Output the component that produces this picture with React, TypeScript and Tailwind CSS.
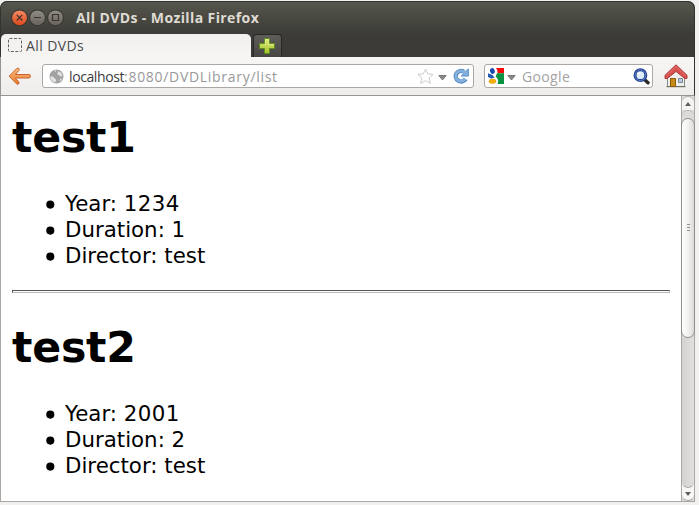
import React from "react";

const uiFont = "font-['Open_Sans','Noto_Sans',sans-serif]";

const dvds = [
  { title: "test1", year: "1234", duration: "1", director: "test" },
  { title: "test2", year: "2001", duration: "2", director: "test" },
];

function WindowButton({ kind }: { kind: "close" | "min" | "max" }) {
  const close = kind === "close";
  return (
    <svg className="block h-[18px] w-[18px]" viewBox="0 0 18 18">
      <defs>
        <linearGradient id={"wb-" + kind} x1="0" y1="0" x2="0" y2="1">
          <stop offset="0" stopColor={close ? "#f58a63" : "#8f8d84"} />
          <stop offset="1" stopColor={close ? "#dc4a1c" : "#66645d"} />
        </linearGradient>
      </defs>
      <circle cx="9.5" cy="8.8" r="8.3" fill="#33322e" />
      <circle cx="9.5" cy="8.8" r="7.4" fill={`url(#wb-${kind})`} />
      <g stroke="#3b332c" strokeWidth="1.2" fill="none">
        {kind === "close" && <path d="M6.7 5.9l5.6 5.6M12.3 5.9l-5.6 5.6" />}
        {kind === "min" && <path d="M6 8.5h7" />}
        {kind === "max" && <path d="M6.5 5.5h6v6h-6z" />}
      </g>
    </svg>
  );
}

function PlusIcon() {
  return (
    <svg className="block h-4 w-4" viewBox="0 0 16 16">
      <defs>
        <linearGradient id="plus" x1="0" y1="0" x2="0" y2="1">
          <stop offset="0" stopColor="#dbea76" />
          <stop offset="1" stopColor="#a6c52e" />
        </linearGradient>
      </defs>
      <path d="M5.5.5h5v5h5v5h-5v5h-5v-5h-5v-5h5z" fill="url(#plus)" stroke="#5f8c1c" />
      <path d="M6.5 6.5v-5h3v5h5" fill="none" stroke="#eef5ac" strokeOpacity=".6" />
    </svg>
  );
}

function BackIcon() {
  return (
    <svg className="block h-[19px] w-[23px]" viewBox="0 0 23 19">
      <defs>
        <linearGradient id="back" x1="0" y1="0" x2="0" y2="1">
          <stop offset="0" stopColor="#f8bd83" />
          <stop offset="1" stopColor="#e8792c" />
        </linearGradient>
      </defs>
      <path
        d="M1.2 9.2 8.8 1.4Q10.6.4 11.2 2L11 3.3 7.3 7.5H20.8Q22.3 7.5 22.3 8.6V9.9Q22.3 11 20.8 11H7.3L11 15.2Q11.3 17.9 8.8 17.1Z"
        fill="url(#back)"
        stroke="#c9632d"
        strokeLinejoin="round"
      />
    </svg>
  );
}

function GlobeIcon() {
  return (
    <svg className="block h-[15px] w-[15px]" viewBox="0 0 15 15">
      <circle cx="7.5" cy="7.5" r="7" fill="#a2a2a2" />
      <path
        d="M5.2 1.6 7.4 1.4 6.6 3.2ZM8.8 2.2 12 3.4 13.4 6.4 11.8 7.8 10.4 6.2 8.6 5.8ZM1.3 7.2 3.6 7.6 6 9.4 7.4 11.4 6 13.6 3.4 12.4 1.6 9.8ZM11.2 10 12.9 9.3 11.9 11.6 10.4 12.6Z"
        fill="#e2e2e2"
      />
    </svg>
  );
}

function StarIcon() {
  return (
    <svg className="block h-[17px] w-[17px]" viewBox="0 0 17 17">
      <path
        d="M8.5 1l2.2 4.9 5.4.5-4 3.6 1.3 5.4-4.9-2.8-4.9 2.8 1.3-5.4-4-3.6 5.4-.5z"
        fill="#fff"
        stroke="#cbcbcb"
        strokeLinejoin="round"
      />
    </svg>
  );
}

function DropArrow() {
  return (
    <svg className="block h-[6px] w-[9px]" viewBox="0 0 9 6">
      <path d="M.8.5h7.4L4.5 5z" fill="#8a8a8a" stroke="#707070" strokeWidth=".9" />
    </svg>
  );
}

function ReloadIcon() {
  return (
    <svg className="block h-4 w-4" viewBox="0 0 16 16">
      <path d="M12.6 11A5.3 5.3 0 1 1 10.8 3.6" fill="none" stroke="#5689c2" strokeWidth="4.4" />
      <path d="M15.4.9v7.2H8.2L10.6 5.6 9 3.8 12.8 3.2Z" fill="#84b0dc" stroke="#5689c2" strokeWidth=".9" strokeLinejoin="round" />
      <path d="M12.2 10.7A5.1 5.1 0 1 1 11.2 4.2L12.6 5.6" fill="none" stroke="#84b0dc" strokeWidth="2.8" />
    </svg>
  );
}

function GoogleIcon() {
  return (
    <svg className="block h-4 w-4" viewBox="0 0 16 16">
      <rect width="16" height="16" fill="#fff" />
      <path d="M8 0h8v5.2H9.6Q10 2 8 0Z" fill="#f50a0a" />
      <path d="M9 5.2h7V16H9.5Q11.5 11.5 7.6 8.4Z" fill="#079242" />
      <path d="M0 5.2 4.5 7 6.5 9.8 3 10.4 0 9Z" fill="#2458b4" />
      <ellipse cx="4.4" cy="3" rx="2.3" ry="3" transform="rotate(-18 4.4 3)" fill="#1648ae" />
      <ellipse cx="4.5" cy="13.3" rx="3.5" ry="2.2" fill="#f5ae0b" stroke="#e39a04" strokeWidth=".5" />
    </svg>
  );
}

function SearchIcon() {
  return (
    <svg className="block h-[17px] w-[17px]" viewBox="0 0 17 17">
      <path d="m11.4 11.4 3.6 3.4" stroke="#292929" strokeWidth="3.4" strokeLinecap="round" />
      <circle cx="7.4" cy="7.2" r="5.4" fill="#dcecf8" stroke="#25408f" strokeWidth="3" />
      <circle cx="7.4" cy="7.2" r="5.4" fill="none" stroke="#5c80cc" strokeWidth="1" />
      <path d="M5 7a2.4 2.4 0 0 1 2.5-2.4" fill="none" stroke="#fff" strokeWidth="1.4" />
    </svg>
  );
}

function HomeIcon() {
  return (
    <svg className="block h-6 w-6" viewBox="0 0 24 24">
      <path d="M3.5 12 12 5l8.5 7v10.5h-17z" fill="#eeeeec" stroke="#888a85" />
      <path d="M2.5 22.7h19" stroke="#666862" />
      <path d="M6.5 14.5h5v8h-5z" fill="#c98a18" stroke="#8b5b0b" />
      <path d="M14.5 14.5h4v4h-4z" fill="#b6cbe0" stroke="#7b8792" />
      <path d="M12 .8 1 11.3v3.2h2.2L12 7.4l8.8 7.1H23v-3.2z" fill="#d95050" stroke="#b03a3c" strokeLinejoin="round" />
      <path d="M2.5 11.6 12 2.5l9.5 9.1" fill="none" stroke="#e57a76" strokeWidth=".8" />
    </svg>
  );
}

function ScrollBar() {
  return (
    <div className="flex w-[14px] flex-col border-x border-[#aaa7a4] bg-[#dcd9d7]">
      <div className="h-[22px] bg-[#dddad8]">
        <div className="flex h-[14px] items-center justify-center rounded-t-[6px] border-t border-[#aaa7a4] bg-[#f5f4f3]">
          <svg className="block h-[4px] w-[6px]" viewBox="0 0 6 4"><path d="M3 0 6 4H0z" fill="#5e5e5e" /></svg>
        </div>
        <div className="h-[8px] rounded-t-[6px] border-t border-[#b7b4b1]" />
      </div>
      <div className="-mx-px flex h-[220px] flex-col items-center justify-center gap-[2px] rounded-[7px] border border-[#92908d] bg-linear-to-r from-white via-[#f3f2f1] to-[#dddad7] pb-[2px]">
        <i className="block h-px w-[3px] bg-[#918f8d]" />
        <i className="block h-px w-[3px] bg-[#918f8d]" />
        <i className="block h-px w-[3px] bg-[#918f8d]" />
      </div>
      <div className="flex flex-1 flex-col bg-[#f8f7f6]">
        <div className="flex-1 rounded-b-[6px] border-b border-[#aaa7a4] bg-linear-to-r from-[#d4d1cf] to-[#e2dfdd]" />
      </div>
      <div className="flex h-[13px] items-center justify-center rounded-b-[6px] border-b border-[#aaa7a4] bg-[#f8f7f6]">
        <svg className="block h-[4px] w-[6px]" viewBox="0 0 6 4"><path d="M0 0h6L3 4z" fill="#5e5e5e" /></svg>
      </div>
    </div>
  );
}

function Detail({ children }: { children: React.ReactNode }) {
  return (
    <li className="flex h-[26px] items-start gap-[10px]">
      <svg className="mt-[9px] block h-[9px] w-[9px]" viewBox="0 0 9 9">
        <circle cx="4.3" cy="4.6" r="4.05" fill="#000" />
      </svg>
      <span>{children}</span>
    </li>
  );
}

export default function App() {
  return (
    <div className="h-[505px] w-[699px] overflow-hidden bg-[#f1f0ee] pt-px">
      <div className="flex h-[501px] w-[695px] flex-col overflow-hidden rounded-t-[7px] bg-[#3c3b37]">
        <header className={`flex h-[56px] shrink-0 flex-col rounded-t-[7px] border-x border-t border-[#33332f] bg-linear-to-b from-[#55564d] to-[#3c3b37] to-60% ${uiFont}`}>
          <div className="flex h-[32px] items-center pl-[9px]">
            <div className="flex">
              <WindowButton kind="close" />
              <WindowButton kind="min" />
              <WindowButton kind="max" />
            </div>
            <h1 className="ml-[12px] -mt-[2px] whitespace-nowrap text-[14px] font-bold tracking-[0.4px] text-[#dfdbd2]">
              All DVDs - Mozilla Firefox
            </h1>
          </div>
          <div className="flex h-[23px] items-end">
            <div className="flex h-[23px] w-[250px] items-center rounded-t-[5px] bg-linear-to-b from-[#f1f0ee] to-[#f6f5f4] pl-[6px] text-[#4a4a4a]">
              <svg className="block h-[15px] w-[15px]" viewBox="0 0 15 15">
                <rect x="1.5" y=".5" width="13" height="13" rx="1" fill="none" stroke="#656565" strokeDasharray="3 1.5" />
              </svg>
              <span className="ml-[4px] text-[14px] tracking-[0.4px]">All DVDs</span>
            </div>
            <div className="ml-[2px] flex h-[23px] w-[29px] items-center justify-center rounded-t-[4px] border border-b-0 border-[#292926] bg-linear-to-b from-[#5f5d5a] to-[#484642] pr-[2px] pb-px">
              <PlusIcon />
            </div>
          </div>
        </header>

        <nav className={`flex h-[39px] shrink-0 items-center border-x border-b border-[#979592] border-r-[#33332f] bg-linear-to-b from-[#f7f6f5] to-[#eeedeb] pl-[7px] text-[14px] ${uiFont}`}>
          <BackIcon />
          <div className="ml-[11px] flex h-[24px] w-[432px] items-center rounded-[3px] border border-[#aaa7a4] bg-white pl-[6px] pr-[4px]">
            <GlobeIcon />
            <span className="ml-[5px] whitespace-nowrap tracking-[-0.4px] text-[#3c3c3c]">
              localhost<span className="tracking-[0.7px] text-[#999]">:8080/DVDLibrary/list</span>
            </span>
            <div className="ml-auto flex items-center">
              <StarIcon />
              <span className="ml-[4px] mt-[3px]"><DropArrow /></span>
              <span className="ml-[6px]"><ReloadIcon /></span>
            </div>
          </div>
          <div className="ml-[10px] flex h-[24px] w-[169px] items-center rounded-[3px] border border-[#aaa7a4] bg-white pl-[3px] pr-[2px]">
            <GoogleIcon />
            <span className="ml-[3px] mt-[3px]"><DropArrow /></span>
            <span className="ml-[6px] tracking-[0.35px] text-[#a3a3a3]">Google</span>
            <span className="ml-auto"><SearchIcon /></span>
          </div>
          <div className="ml-[11px]"><HomeIcon /></div>
        </nav>

        <div className="flex min-h-0 flex-1 border-b border-l border-[#aaa7a4] bg-white">
          <main className="flex-1 pl-[11px] pr-[11px] pt-[16px] font-['DejaVu_Sans',sans-serif] text-[21.33px] leading-[26px] text-black">
            {dvds.map((dvd, index) => (
              <React.Fragment key={dvd.title}>
                {index > 0 && (
                  <hr className="mb-[29px] mt-[21px] h-[3px] border border-[#b8b8b8] border-l-[#555] border-t-[#555]" />
                )}
                <h2 className="mb-[29px] h-[50px] text-[42.67px] font-bold leading-[50px] tracking-[-0.2px]">{dvd.title}</h2>
                <ul className="pl-[34px]">
                  <Detail>Year: <span className="tracking-[0.43px]">{dvd.year}</span></Detail>
                  <Detail>Duration: {dvd.duration}</Detail>
                  <Detail>Director: {dvd.director}</Detail>
                </ul>
              </React.Fragment>
            ))}
          </main>
          <ScrollBar />
        </div>
      </div>
    </div>
  );
}
